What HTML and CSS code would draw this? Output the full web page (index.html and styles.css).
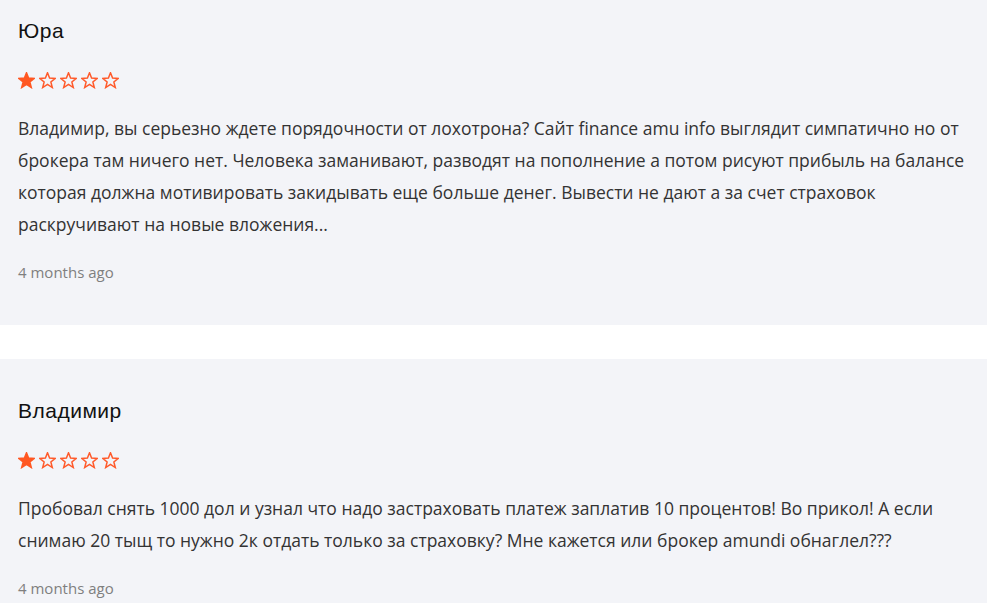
FILE: index.html
```html
<!DOCTYPE html>
<html lang="ru">
<head>
<meta charset="utf-8">
<link rel="stylesheet" href="styles.css">
</head>
<body>
<svg width="0" height="0" class="defs">
  <defs>
    <symbol id="star" viewBox="0 0 24 24">
      <path d="M12 1.1L14.94 8.55L22.94 9.05L16.76 14.15L18.76 21.9L12 17.6L5.24 21.9L7.24 14.15L1.06 9.05L9.06 8.55Z"/>
    </symbol>
  </defs>
</svg>
<div class="list">
  <article class="review">
    <h3 class="name">Юра</h3>
    <div class="stars">
      <svg class="star full"><use href="#star"/></svg>
      <svg class="star"><use href="#star"/></svg>
      <svg class="star"><use href="#star"/></svg>
      <svg class="star"><use href="#star"/></svg>
      <svg class="star"><use href="#star"/></svg>
    </div>
    <p class="text">Владимир, вы серьезно ждете порядочности от лохотрона? Сайт finance amu info выглядит симпатично но от брокера там ничего нет. Человека заманивают, разводят на пополнение а потом рисуют прибыль на балансе которая должна мотивировать закидывать еще больше денег. Вывести не дают а за счет страховок раскручивают на новые вложения...</p>
    <div class="time">4 months ago</div>
  </article>
  <article class="review">
    <h3 class="name">Владимир</h3>
    <div class="stars">
      <svg class="star full"><use href="#star"/></svg>
      <svg class="star"><use href="#star"/></svg>
      <svg class="star"><use href="#star"/></svg>
      <svg class="star"><use href="#star"/></svg>
      <svg class="star"><use href="#star"/></svg>
    </div>
    <p class="text">Пробовал снять 1000 дол и узнал что надо застраховать платеж заплатив 10 процентов! Во прикол! А если снимаю 20 тыщ то нужно 2к отдать только за страховку? Мне кажется или брокер amundi обнаглел???</p>
    <div class="time">4 months ago</div>
  </article>
</div>
</body>
</html>
```

FILE: styles.css
```css
html, body {
  margin: 0;
  padding: 0;
  background: #ffffff;
}
.defs {
  position: absolute;
  width: 0;
  height: 0;
}
.list {
  margin-top: -21px;
  display: flex;
  flex-direction: column;
  gap: 34px;
}
.review {
  background: #f3f4f8;
  padding: 40px 18px 43px;
}
.name {
  margin: 0;
  font-family: "Liberation Sans", Arial, sans-serif;
  font-weight: 400;
  font-size: 21px;
  letter-spacing: 0.5px;
  line-height: 24px;
  color: #111111;
}
.stars {
  display: flex;
  gap: 4px;
  margin-top: 29px;
  height: 17px;
}
.star {
  width: 17px;
  height: 17px;
  overflow: visible;
  fill: none;
  stroke: #ff5a2b;
  stroke-width: 2.1;
  stroke-linejoin: miter;
}
.star.full {
  fill: #ff5722;
  stroke: #ff5722;
}
.text {
  margin: 23px 0 0;
  font-family: "Open Sans", sans-serif;
  font-size: 17.5px;
  line-height: 32px;
  color: #333333;
  max-width: 951px;
}
.time {
  margin-top: 22px;
  font-family: "Open Sans", sans-serif;
  font-size: 15px;
  line-height: 20px;
  color: #7f7f7f;
}
```
